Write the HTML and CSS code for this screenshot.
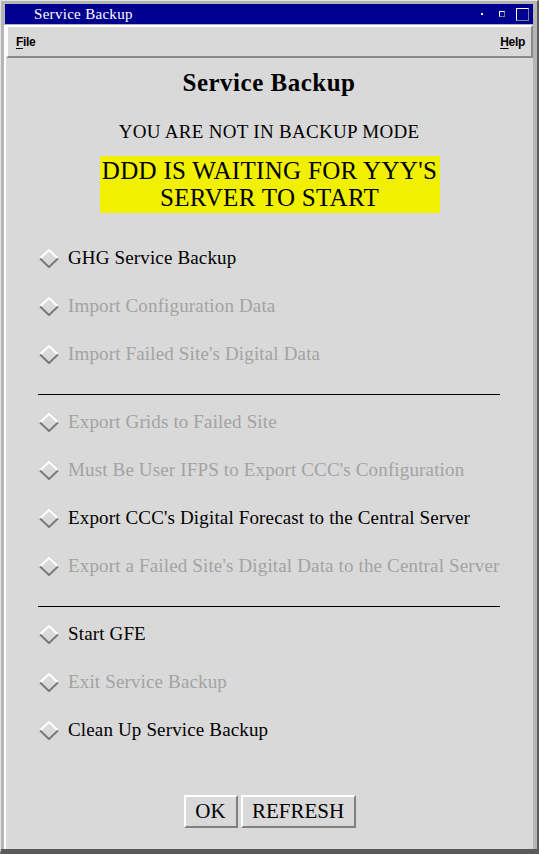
FILE: index.html
```html
<!DOCTYPE html>
<html>
<head>
<meta charset="utf-8">
<title>Service Backup</title>
<link rel="stylesheet" href="styles.css">
</head>
<body>
<div class="window">
  <div class="titlebar">
    <span class="title">Service Backup</span>
    <span class="tb-icons">
      <span class="tb-dot"></span>
      <span class="tb-min"></span>
      <span class="tb-max"></span>
    </span>
  </div>
  <div class="client">
    <div class="menubar">
      <span class="menu"><u>F</u>ile</span>
      <span class="menu"><u>H</u>elp</span>
    </div>
    <div class="content">
      <h1 class="heading">Service Backup</h1>
      <div class="mode">YOU ARE NOT IN BACKUP MODE</div>
      <div class="status-wrap"><div class="status"><span>DDD IS WAITING FOR YYY'S</span><span>SERVER TO START</span></div></div>
      <div class="group">
        <div class="row"><svg class="diamond" viewBox="0 0 20 19"><polyline class="hi" points="1,9.5 10,1 19,9.5"/><polyline class="lo" points="1,9.5 10,18 19,9.5"/></svg><span class="label">GHG Service Backup</span></div>
        <div class="row off"><svg class="diamond" viewBox="0 0 20 19"><polyline class="hi" points="1,9.5 10,1 19,9.5"/><polyline class="lo" points="1,9.5 10,18 19,9.5"/></svg><span class="label">Import Configuration Data</span></div>
        <div class="row off"><svg class="diamond" viewBox="0 0 20 19"><polyline class="hi" points="1,9.5 10,1 19,9.5"/><polyline class="lo" points="1,9.5 10,18 19,9.5"/></svg><span class="label">Import Failed Site's Digital Data</span></div>
      </div>
      <div class="sep"></div>
      <div class="group">
        <div class="row off"><svg class="diamond" viewBox="0 0 20 19"><polyline class="hi" points="1,9.5 10,1 19,9.5"/><polyline class="lo" points="1,9.5 10,18 19,9.5"/></svg><span class="label">Export Grids to Failed Site</span></div>
        <div class="row off"><svg class="diamond" viewBox="0 0 20 19"><polyline class="hi" points="1,9.5 10,1 19,9.5"/><polyline class="lo" points="1,9.5 10,18 19,9.5"/></svg><span class="label">Must Be User IFPS to Export CCC's Configuration</span></div>
        <div class="row"><svg class="diamond" viewBox="0 0 20 19"><polyline class="hi" points="1,9.5 10,1 19,9.5"/><polyline class="lo" points="1,9.5 10,18 19,9.5"/></svg><span class="label">Export CCC's Digital Forecast to the Central Server</span></div>
        <div class="row off"><svg class="diamond" viewBox="0 0 20 19"><polyline class="hi" points="1,9.5 10,1 19,9.5"/><polyline class="lo" points="1,9.5 10,18 19,9.5"/></svg><span class="label">Export a Failed Site's Digital Data to the Central Server</span></div>
      </div>
      <div class="sep"></div>
      <div class="group">
        <div class="row"><svg class="diamond" viewBox="0 0 20 19"><polyline class="hi" points="1,9.5 10,1 19,9.5"/><polyline class="lo" points="1,9.5 10,18 19,9.5"/></svg><span class="label">Start GFE</span></div>
        <div class="row off"><svg class="diamond" viewBox="0 0 20 19"><polyline class="hi" points="1,9.5 10,1 19,9.5"/><polyline class="lo" points="1,9.5 10,18 19,9.5"/></svg><span class="label">Exit Service Backup</span></div>
        <div class="row"><svg class="diamond" viewBox="0 0 20 19"><polyline class="hi" points="1,9.5 10,1 19,9.5"/><polyline class="lo" points="1,9.5 10,18 19,9.5"/></svg><span class="label">Clean Up Service Backup</span></div>
      </div>
      <div class="buttons">
        <button class="btn btn-ok">OK</button>
        <button class="btn btn-refresh">REFRESH</button>
      </div>
    </div>
  </div>
</div>
</body>
</html>
```

FILE: styles.css
```css
html, body {
  margin: 0;
  padding: 0;
  width: 539px;
  height: 854px;
  overflow: hidden;
  background: #b5b5b5;
}
.window {
  box-sizing: border-box;
  width: 539px;
  height: 854px;
  border-style: solid;
  border-width: 1px 2px 5px 1px;
  border-color: #e4e4e4 #5a5a5a #5a5a5a #e4e4e4;
  background: #b5b5b5;
  padding: 3px 4px 0 3px;
  display: flex;
  flex-direction: column;
}
.titlebar {
  height: 20px;
  margin-left: 1px;
  background: #000090;
  display: flex;
  align-items: center;
  justify-content: space-between;
  padding: 0 4px 0 29px;
  flex: none;
}
.title {
  color: #ffffff;
  font-family: "Liberation Serif", serif;
  font-size: 15px;
  letter-spacing: 0.3px;
}
.tb-icons {
  display: flex;
  align-items: center;
}
.tb-dot {
  width: 2px;
  height: 2px;
  background: #ffffff;
  margin-right: 16px;
}
.tb-min {
  box-sizing: border-box;
  width: 6px;
  height: 6px;
  border: 1px solid;
  border-color: #ffffff #808080 #808080 #ffffff;
  margin-right: 11px;
}
.tb-max {
  box-sizing: border-box;
  width: 13px;
  height: 13px;
  border: 1px solid;
  border-color: #ffffff #808080 #808080 #ffffff;
}
.client {
  flex: 1;
  display: flex;
  flex-direction: column;
  margin-top: 1px;
  border-left: 2px solid #ffffff;
  background: #d9d9d9;
}
.menubar {
  box-sizing: border-box;
  height: 33px;
  border-style: solid;
  border-width: 2px;
  border-color: #ffffff #8a8a8a #8a8a8a #ffffff;
  background: #d9d9d9;
  display: flex;
  justify-content: space-between;
  align-items: center;
  padding: 1px 6px 0 8px;
  flex: none;
}
.menu {
  font-family: "Liberation Sans", Arial, sans-serif;
  font-weight: bold;
  font-size: 12px;
  letter-spacing: -0.3px;
  color: #000;
}
.menu u {
  text-decoration-thickness: 1px;
  text-underline-offset: 2px;
}
.content {
  flex: 1;
  padding: 0 33px 0 32px;
  font-family: "Liberation Serif", "Times New Roman", serif;
  color: #000;
}
.heading {
  margin: 10px 0 0 0;
  text-align: center;
  font-size: 25px;
  line-height: 30px;
  font-weight: bold;
  letter-spacing: 0.5px;
}
.mode {
  margin-top: 22px;
  text-align: center;
  font-size: 19px;
  line-height: 24px;
  letter-spacing: 0.3px;
}
.status-wrap {
  display: flex;
  justify-content: center;
  margin-top: 12px;
}
.status {
  background: #f0f000;
  width: 340px;
  display: flex;
  flex-direction: column;
  align-items: center;
  font-size: 25px;
  line-height: 27px;
  padding: 1px 0 2px 0;
  margin-left: 1px;
  white-space: nowrap;
  letter-spacing: 0.3px;
}
.group {
  display: flex;
  flex-direction: column;
}
.status-wrap + .group {
  margin-top: 21px;
}
.row {
  height: 48px;
  display: flex;
  align-items: center;
  gap: 9px;
  padding-left: 1px;
  font-size: 19px;
  letter-spacing: 0.15px;
  color: #000;
  white-space: nowrap;
}
.row.off {
  color: #a3a3a3;
}
.diamond {
  width: 20px;
  height: 19px;
  flex: none;
}
.diamond polyline {
  fill: none;
  stroke-width: 2;
  stroke-linejoin: miter;
}
.diamond .hi {
  stroke: #ffffff;
}
.diamond .lo {
  stroke: #7a7a7a;
}
.sep {
  height: 1px;
  background: #000;
  margin: 16px 0 3px 0;
}
.buttons {
  display: flex;
  justify-content: center;
  gap: 3px;
  margin-top: 41px;
  padding-left: 1px;
}
.btn {
  box-sizing: border-box;
  height: 33px;
  background: #d9d9d9;
  border-style: solid;
  border-width: 2px;
  border-color: #ffffff #808080 #808080 #ffffff;
  font-family: "Liberation Serif", "Times New Roman", serif;
  font-size: 21px;
  color: #000;
  padding: 0;
}
.btn-ok {
  width: 54px;
}
.btn-refresh {
  width: 115px;
}
```
